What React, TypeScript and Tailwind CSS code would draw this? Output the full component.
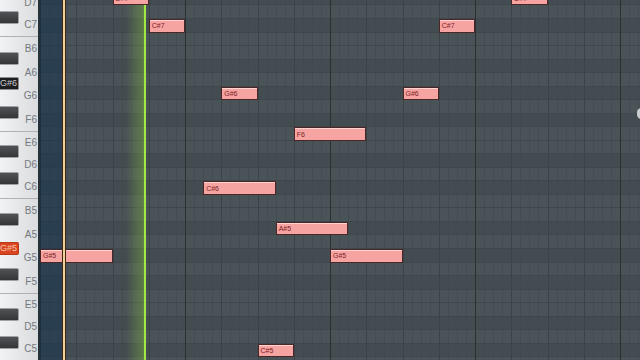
import React from "react";

// piano roll geometry (px)
const BEAT_W = 36.25;
const NAMES = ["C", "C#", "D", "D#", "E", "F", "F#", "G", "G#", "A", "A#", "B"];

type Note = { pitch: string; start: number; len: number };

// notes in the roll: start and length in beats
const notes: Note[] = [
  { pitch: "D#7", start: 2, len: 1 },
  { pitch: "D#7", start: 13, len: 1 },
  { pitch: "C#7", start: 3, len: 1 },
  { pitch: "C#7", start: 11, len: 1 },
  { pitch: "G#6", start: 5, len: 1 },
  { pitch: "G#6", start: 10, len: 1 },
  { pitch: "F6", start: 7, len: 2 },
  { pitch: "C#6", start: 4.5, len: 2 },
  { pitch: "A#5", start: 6.5, len: 2 },
  { pitch: "G#5", start: 0, len: 2 },
  { pitch: "G#5", start: 8, len: 2 },
  { pitch: "C#5", start: 6, len: 1 },
];

// white keys from top (E7 is mostly scrolled off)
const whiteKeys = [
  { name: "E7", wide: false, sep: false },
  { name: "D7", wide: false, sep: false },
  { name: "C7", wide: false, sep: true },
  { name: "B6", wide: true, sep: false },
  { name: "A6", wide: true, sep: false },
  { name: "G6", wide: true, sep: false },
  { name: "F6", wide: true, sep: true },
  { name: "E6", wide: false, sep: false },
  { name: "D6", wide: false, sep: false },
  { name: "C6", wide: false, sep: true },
  { name: "B5", wide: true, sep: false },
  { name: "A5", wide: true, sep: false },
  { name: "G5", wide: true, sep: false },
  { name: "F5", wide: true, sep: true },
  { name: "E5", wide: false, sep: false },
  { name: "D5", wide: false, sep: false },
  { name: "C5", wide: false, sep: true },
];

// black keys drawn over the white ones
const blackKeys = [
  { name: "C#7", top: 11, mode: "" },
  { name: "A#6", top: 52, mode: "" },
  { name: "G#6", top: 77, mode: "dark" },
  { name: "F#6", top: 106, mode: "" },
  { name: "D#6", top: 145, mode: "" },
  { name: "C#6", top: 172, mode: "" },
  { name: "A#5", top: 213, mode: "" },
  { name: "G#5", top: 242, mode: "red" },
  { name: "F#5", top: 268, mode: "" },
  { name: "D#5", top: 308, mode: "" },
  { name: "C#5", top: 336, mode: "" },
];

const pitchName = (midi: number) =>
  NAMES[midi % 12] + (Math.floor(midi / 12) - 1);

// E7 (100) down to C5 (72)
const rows = Array.from({ length: 29 }, (_, i) => 100 - i);

const Keyboard: React.FC = () => (
  <div className="relative h-full w-[40px] shrink-0 overflow-hidden border-r-2 border-[#26323a]">
    <div className="mt-[-30px] flex flex-col">
      {whiteKeys.map((k) => (
        <div
          key={k.name}
          className={`flex shrink-0 items-center justify-end bg-linear-to-r from-[#f1f2f3] to-[#dadcde] pr-[1px] text-[10px] leading-none text-[#737980] ${
            k.wide ? "h-[23.75px]" : "h-[22.33px]"
          } ${k.sep ? "border-b border-[#aeb2b6]" : ""}`}
        >
          {k.name}
        </div>
      ))}
    </div>
    {blackKeys.map((k) => (
      <div
        key={k.name}
        style={{ top: k.top }}
        className={`absolute left-0 flex h-[13px] w-[19px] items-center justify-end rounded-r-[2px] border border-l-0 pr-[1px] text-[9px] leading-none ${
          k.mode === "red"
            ? "border-[#b8391a] bg-[#d8451f] text-[#f8c7b0]"
            : k.mode === "dark"
            ? "border-[#8c9095] bg-[#1d1e1f] text-[#c9cbcd]"
            : "border-[#9ca1a6] bg-linear-to-b from-[#505255] to-[#343638]"
        }`}
      >
        {k.mode ? k.name : ""}
      </div>
    ))}
  </div>
);

const Roll: React.FC = () => (
  <div className="relative grid h-full flex-1 overflow-hidden bg-[#485156]">
    {/* key rows with the notes */}
    <div className="col-start-1 row-start-1 mt-[-21.62px] flex flex-col">
      {rows.map((midi) => {
        const name = pitchName(midi);
        const black = name.includes("#");
        return (
          <div
            key={midi}
            className={`relative h-[13.54px] shrink-0 border-b border-[#3f474c] ${
              black ? "bg-[#434c51]" : "bg-[#4a5358]"
            }`}
          >
            {notes
              .filter((n) => n.pitch === name)
              .map((n, i) => (
                <div
                  key={i}
                  style={{ left: n.start * BEAT_W, width: n.len * BEAT_W }}
                  className="absolute top-0 z-10 flex h-[13.54px] items-center border border-[#4a2626] bg-[#f6a4a2] pl-[2px] text-[7px] leading-none text-[#7d2222] shadow-[inset_0_1px_0_#ffd3cf]"
                >
                  {n.pitch}
                </div>
              ))}
          </div>
        );
      })}
    </div>

    {/* beat / bar lines */}
    <div className="relative col-start-1 row-start-1 flex h-[360px]">
      {Array.from({ length: 17 }).map((_, i) => (
        <div
          key={i}
          className={`flex h-full w-[36.25px] shrink-0 border-l ${
            i % 4 === 0 ? "border-[#2a3034]" : "border-[#3b4348]"
          }`}
        >
          <div className="h-full flex-1" />
          <div className="h-full flex-1 border-l border-[#41494e]/70" />
          <div className="h-full flex-1 border-l border-[#41494e]/70" />
          <div className="h-full flex-1 border-l border-[#41494e]/70" />
        </div>
      ))}
    </div>

    {/* area before the loop start */}
    <div className="absolute left-0 top-0 h-full w-[22px] bg-[#0f2f4c]/50" />
    {/* loop start marker */}
    <div className="absolute left-[21.5px] top-0 z-20 h-full w-[4px] border-x border-[#3a2914] bg-[#f3d19a]" />
    {/* playhead */}
    <div className="absolute left-[86px] top-0 h-full w-[18px] bg-linear-to-r from-transparent to-[#8fd43a]/35" />
    <div className="absolute left-[104px] top-0 h-full w-[2px] bg-[#a2e844]" />
    {/* scroll handle peeking in on the right */}
    <div className="absolute right-[-6px] top-[108px] z-20 h-[11px] w-[9px] rounded-full bg-[#c9cdd0]" />
  </div>
);

const App: React.FC = () => {
  return (
    <div className="flex h-[360px] w-[640px] overflow-hidden bg-[#485156] font-['Liberation_Sans',Arial,sans-serif]">
      <Keyboard />
      <Roll />
    </div>
  );
};

export default App;
